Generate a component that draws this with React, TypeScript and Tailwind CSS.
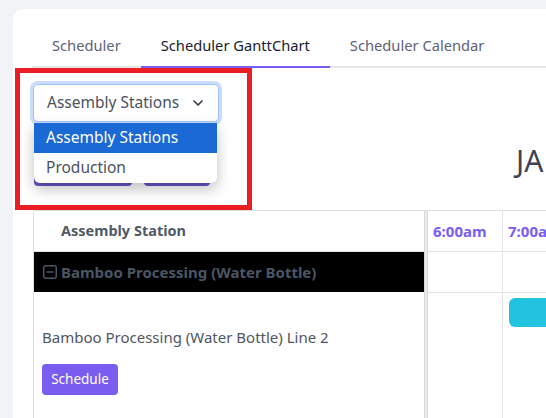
import { ChevronDown } from "lucide-react";

const font = { fontFamily: '"Noto Sans", "Open Sans", sans-serif' };

function Tabs() {
  const tabs = ["Scheduler", "Scheduler GanttChart", "Scheduler Calendar"];
  return (
    <div className="ml-[19px] flex border-b-2 border-[#e4e6ea]">
      {tabs.map((t, i) => (
        <div
          key={t}
          className={
            i === 1
              ? "-mb-[2px] border-b-2 border-[#7b5cf0] px-[20px] pt-[25px] pb-[10px] text-[14.7px] text-[#181c32]"
              : "px-[20px] pt-[25px] pb-[10px] text-[14.7px] text-[#5e6278]"
          }
        >
          {t}
        </div>
      ))}
    </div>
  );
}

export default function App() {
  return (
    <div className="relative h-[418px] w-[546px] overflow-hidden bg-[#f1f4f6]" style={font}>
      <div className="ml-[13px] mt-[9px] h-[420px] overflow-hidden rounded-tl-[10px] bg-white">
        <Tabs />

        <div className="relative ml-[20px]">
          {/* select */}
          <div className="pt-[16px]">
            <div className="flex h-[38px] w-[186px] items-center justify-between rounded-[5px] border border-[#9ec5fe] bg-white pl-[13px] pr-[12px] text-[15.5px] text-[#4b5260] shadow-[0_0_0_3px_#c9dcfb]">
              <span>Assembly Stations</span>
              <ChevronDown size={16} strokeWidth={2.5} className="text-[#333a44]" />
            </div>
          </div>

          {/* buttons under the open list */}
          <div className="mt-[33px] flex gap-[12px] pl-[1px]">
            <div className="h-[31px] w-[98px] rounded-[4px] bg-[#6b53c9]" />
            <div className="h-[31px] w-[66px] rounded-[4px] bg-[#6b53c9]" />
          </div>

          {/* open list */}
          <div className="absolute left-[1px] top-[55px] w-[183px] overflow-hidden rounded-b-[6px] bg-white text-[15.5px] shadow-[0_6px_14px_rgba(0,0,0,0.25)]">
            <div className="flex h-[30px] items-center bg-[#1a69d4] pl-[12px] text-white">Assembly Stations</div>
            <div className="flex h-[30px] items-center pl-[12px] text-[#4b5260]">Production</div>
          </div>

          <div className="absolute left-[483px] top-[78px] text-[30px] leading-none text-[#3f4254]">JA</div>
        </div>

        {/* table */}
        <div className="ml-[20px] mt-[24px] flex border-l border-t border-[#dedede]">
          <div className="flex w-[390px] shrink-0 flex-col">
            <div className="flex h-[41px] items-center border-b border-[#e3e3e3] pl-[27px] text-[14.5px] font-bold text-[#505a68]">
              Assembly Station
            </div>
            <div className="flex h-[40px] items-center gap-[4px] bg-black pl-[9px] text-[15px] font-bold text-[#4a5565]">
              <svg width="14" height="14" viewBox="0 0 14 14" fill="none">
                <rect x="0.75" y="0.75" width="12.5" height="12.5" rx="2" stroke="#4a5565" strokeWidth="1.5" />
                <path d="M3.5 7h7" stroke="#4a5565" strokeWidth="1.5" />
              </svg>
              <span>Bamboo Processing (Water Bottle)</span>
            </div>
            <div className="flex flex-col pl-[8px] pt-[34px]">
              <div className="text-[15px] text-[#4f5664]">Bamboo Processing (Water Bottle) Line 2</div>
              <div className="mt-[15px] flex h-[31px] w-[76px] items-center justify-center rounded-[4px] bg-[#7b5cf0] text-[13.5px] text-white">
                Schedule
              </div>
            </div>
          </div>
          <div className="w-[4px] shrink-0 border-x border-[#d8d8d8] bg-[#ececec]" />
          <div className="flex min-w-0 flex-1 flex-col">
            <div className="flex h-[41px] border-b border-[#e3e3e3]">
              <div className="flex w-[75px] shrink-0 items-center border-r border-[#e3e3e3] pl-[5px] text-[15px] font-bold text-[#7b5cf5]">
                6:00am
              </div>
              <div className="flex flex-1 items-center whitespace-nowrap pl-[5px] text-[15px] font-bold text-[#7b5cf5]">
                7:00am
              </div>
            </div>
            <div className="flex h-[41px] border-b border-[#e3e3e3]">
              <div className="w-[75px] shrink-0 border-r border-[#e3e3e3]" />
              <div className="flex-1" />
            </div>
            <div className="flex h-[130px]">
              <div className="w-[75px] shrink-0 border-r border-[#e3e3e3]" />
              <div className="flex-1 pl-[6px] pt-[5px]">
                <div className="h-[29px] w-[60px] rounded-[6px] bg-[#22c3e0]" />
              </div>
            </div>
          </div>
        </div>
      </div>

      {/* annotation box */}
      <div className="absolute left-[15px] top-[68px] h-[142px] w-[237px] border-[5px] border-[#ec1c24]" />
    </div>
  );
}
